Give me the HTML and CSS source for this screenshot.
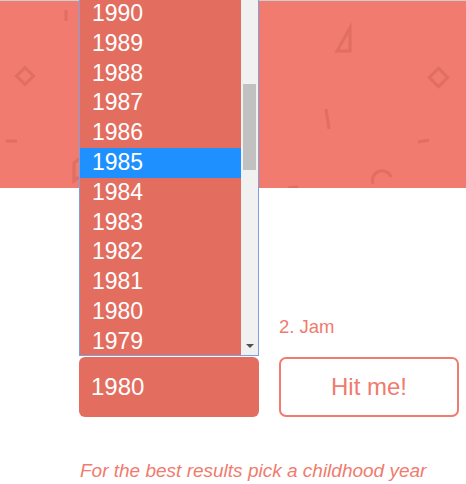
FILE: index.html
```html
<!DOCTYPE html>
<html lang="en">
<head>
<meta charset="utf-8">
<title>Year picker</title>
<link rel="stylesheet" href="styles.css">
</head>
<body>
<header class="hero">
  <svg class="shapes" width="466" height="187" viewBox="0 0 466 187" aria-hidden="true">
    <g fill="none" stroke="#dc6a5e" stroke-width="3" stroke-linecap="butt" opacity="0.75">
      <rect x="19" y="69" width="12" height="12" transform="rotate(45 25 75)"/>
      <line x1="66" y1="9" x2="66" y2="20"/>
      <line x1="6" y1="140" x2="17" y2="140"/>
      <path d="M79 158 L74 162 L74 180 L79 176"/>
      <path d="M350 27 L350 50 L337 50 Z"/>
      <rect x="432" y="70" width="13" height="13" transform="rotate(45 438.5 76.5)"/>
      <line x1="326" y1="108" x2="329" y2="128"/>
      <line x1="418" y1="141" x2="429" y2="139"/>
      <path d="M373 183 A9 9 0 0 1 391 176"/>
      <line x1="288" y1="187" x2="298" y2="186"/>
    </g>
  </svg>
</header>
<main class="panel">
  <p class="step">2. Jam</p>
  <div class="controls">
    <div class="picker">
      <div class="picker-value">1980</div>
      <div class="dropdown">
        <ul class="options">
          <li>1990</li>
          <li>1989</li>
          <li>1988</li>
          <li>1987</li>
          <li>1986</li>
          <li class="selected">1985</li>
          <li>1984</li>
          <li>1983</li>
          <li>1982</li>
          <li>1981</li>
          <li>1980</li>
          <li>1979</li>
        </ul>
        <div class="scrollbar">
          <div class="thumb"></div>
          <div class="arrow"></div>
        </div>
      </div>
    </div>
    <button class="hit" type="button">Hit me!</button>
  </div>
  <p class="note">For the best results pick a childhood year</p>
</main>
</body>
</html>
```

FILE: styles.css
```css
html, body {
  margin: 0;
  padding: 0;
  background: #ffffff;
}

body {
  font-family: "Liberation Sans", Arial, sans-serif;
  width: 466px;
  overflow: hidden;
}

.hero {
  height: 187px;
  background: #f07b6e;
  border-top: 1px solid #c8ced4;
}

.shapes {
  display: block;
}

.panel {
  display: grid;
  grid-template-columns: 180px 180px;
  column-gap: 20px;
  padding: 128px 0 0 79px;
}

.step {
  grid-column: 2;
  margin: 0;
  font-size: 18.5px;
  line-height: 22px;
  color: #f07b6e;
}

.controls {
  grid-column: 1 / 3;
  display: grid;
  grid-template-columns: 180px 180px;
  column-gap: 20px;
  margin-top: 19px;
  height: 60px;
}

.picker {
  position: relative;
}

.picker-value {
  height: 60px;
  box-sizing: border-box;
  display: flex;
  align-items: center;
  padding-left: 12px;
  background: #e36e60;
  border-radius: 6px;
  color: #ffffff;
  font-size: 24px;
}

.dropdown {
  position: absolute;
  left: 0;
  bottom: calc(100% + 1px);
  width: 180px;
  height: 357px;
  box-sizing: border-box;
  border: 1px solid #7ba0de;
  border-top: 0;
  background: #e36e60;
  display: flex;
  overflow: hidden;
}

.options {
  list-style: none;
  margin: 0;
  padding: 0;
  flex: 1;
}

.options li {
  height: 29.8px;
  line-height: 29.8px;
  padding-left: 12px;
  font-size: 23px;
  color: #ffffff;
}

.options li.selected {
  background: #1e90ff;
}

.scrollbar {
  width: 17px;
  background: #f1f1f1;
  display: flex;
  flex-direction: column;
  align-items: center;
}

.thumb {
  width: 13px;
  height: 86px;
  margin-top: 85px;
  background: #c1c1c1;
}

.arrow {
  margin-top: auto;
  margin-bottom: 7px;
  width: 0;
  height: 0;
  border-left: 4px solid transparent;
  border-right: 4px solid transparent;
  border-top: 4px solid #505050;
}

.hit {
  height: 60px;
  box-sizing: border-box;
  background: #ffffff;
  border: 2px solid #f07b6e;
  border-radius: 7px;
  color: #f07b6e;
  font-family: "Liberation Sans", Arial, sans-serif;
  font-size: 24px;
  padding: 0;
}

.note {
  grid-column: 1 / 3;
  margin: 43px 0 0 1px;
  font-size: 19px;
  line-height: 22px;
  font-style: italic;
  color: #f07b6e;
  white-space: nowrap;
}
```
